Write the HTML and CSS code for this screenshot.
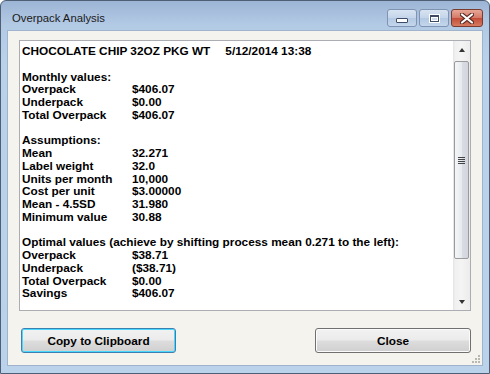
FILE: index.html
```html
<!DOCTYPE html>
<html lang="en">
<head>
    <meta charset="utf-8">
    <title>Overpack Analysis</title>
    <link rel="stylesheet" href="styles.css">
</head>
<body>

    <div class="window">
        <div class="titlebar">
            <span class="title">Overpack Analysis</span>
            <div class="caption">
                <div class="cap min"><span class="min-glyph"></span></div>
                <div class="cap max"><span class="max-glyph"></span></div>
                <div class="cap close">
                    <svg width="14" height="11" viewBox="0 0 14 11">
                        <path d="M2 1.5 L12 9.5 M12 1.5 L2 9.5" stroke="#5a2a22" stroke-width="4.2" stroke-linecap="round"/>
                        <path d="M2 1.5 L12 9.5 M12 1.5 L2 9.5" stroke="#fff" stroke-width="2.2" stroke-linecap="round"/>
                    </svg>
                </div>
            </div>
        </div>

        <div class="client">
            <div class="output">
                <div class="text">
                    <div class="line">CHOCOLATE CHIP 32OZ PKG WT<span class="date">5/12/2014 13:38</span></div>

                    <div class="block">
                        <div class="line">Monthly values:</div>
                        <div class="row"><span>Overpack</span><span>$406.07</span></div>
                        <div class="row"><span>Underpack</span><span>$0.00</span></div>
                        <div class="row"><span>Total Overpack</span><span>$406.07</span></div>
                    </div>

                    <div class="block">
                        <div class="line">Assumptions:</div>
                        <div class="row"><span>Mean</span><span>32.271</span></div>
                        <div class="row"><span>Label weight</span><span>32.0</span></div>
                        <div class="row"><span>Units per month</span><span>10,000</span></div>
                        <div class="row"><span>Cost per unit</span><span>$3.00000</span></div>
                        <div class="row"><span>Mean - 4.5SD</span><span>31.980</span></div>
                        <div class="row"><span>Minimum value</span><span>30.88</span></div>
                    </div>

                    <div class="block">
                        <div class="line">Optimal values (achieve by shifting process mean 0.271 to the left):</div>
                        <div class="row"><span>Overpack</span><span>$38.71</span></div>
                        <div class="row"><span>Underpack</span><span>($38.71)</span></div>
                        <div class="row"><span>Total Overpack</span><span>$0.00</span></div>
                        <div class="row"><span>Savings</span><span>$406.07</span></div>
                    </div>
                </div>

                <div class="scrollbar">
                    <div class="arrow"><span class="up"></span></div>
                    <div class="thumb">
                        <div class="grip"></div>
                    </div>
                    <div class="track"></div>
                    <div class="arrow"><span class="down"></span></div>
                </div>
            </div>

            <div class="buttons">
                <button class="btn default">Copy to Clipboard</button>
                <button class="btn">Close</button>
            </div>

            <svg class="sizegrip" width="10" height="10" viewBox="0 0 10 10">
                <g fill="#b8b8b0">
                    <rect x="7" y="1" width="2" height="2"/>
                    <rect x="4" y="4" width="2" height="2"/>
                    <rect x="7" y="4" width="2" height="2"/>
                    <rect x="1" y="7" width="2" height="2"/>
                    <rect x="4" y="7" width="2" height="2"/>
                    <rect x="7" y="7" width="2" height="2"/>
                </g>
            </svg>
        </div>
    </div>

</body>
</html>
```

FILE: styles.css
```css
body {
    margin: 0;
    background-color: #ffffff;
}

.window {
    width: 490px;
    height: 374px;
    box-sizing: border-box;
    border: 1px solid #4d5e75;
    border-radius: 6px 6px 0 0;
    background: linear-gradient(#9db5d5 0, #b3cae5 24px, #bad1ea 60px, #bbd2eb 100%);
    padding: 0 6px 7px 6px;
    display: flex;
    flex-direction: column;
}

.titlebar {
    height: 29px;
    display: flex;
    align-items: flex-start;
    justify-content: space-between;
    flex-shrink: 0;
}

.title {
    font-family: "Liberation Sans", Arial, sans-serif;
    font-size: 11.3px;
    color: #1a1a1a;
    margin: 11px 0 0 5px;
}

.caption {
    display: flex;
    gap: 2px;
    margin-top: 8px;
}

.cap {
    height: 18px;
    box-sizing: border-box;
    border: 1px solid #7f94b2;
    border-radius: 3px;
    display: flex;
    align-items: center;
    justify-content: center;
    background: linear-gradient(#d7e3f1 0, #c4d5ea 50%, #b3c8e2 51%, #c3d6ec 100%);
}

.min, .max {
    width: 30px;
}

.close {
    width: 32px;
    border-color: #7a3a30;
    background: linear-gradient(#e7a797 0, #d47866 50%, #c44c38 51%, #d57a60 100%);
}

.min-glyph {
    width: 10px;
    height: 3px;
    margin-top: 5px;
    background: #ffffff;
    border: 1px solid #3c4c66;
    border-radius: 1px;
}

.max-glyph {
    width: 7px;
    height: 4px;
    border: 1px solid #3c4c66;
    border-top-width: 2px;
    box-shadow: 0 0 0 1px #ffffff, inset 0 0 0 1px #ffffff;
    background: #cfdcec;
}

.client {
    flex: 1;
    background-color: #f4f3ee;
    border: 1px solid #9fb3cc;
    padding: 9px 11px 0 11px;
    display: flex;
    flex-direction: column;
    position: relative;
}

.output {
    height: 271px;
    box-sizing: border-box;
    border: 1px solid #abadb3;
    background: #ffffff;
    display: flex;
}

.text {
    flex: 1;
    padding: 4px 2px 3px 2px;
    font-family: "Liberation Sans", Arial, sans-serif;
    font-weight: bold;
    font-size: 11.8px;
    line-height: 12.75px;
    color: #000000;
    white-space: nowrap;
}

.date {
    margin-left: 15px;
}

.block {
    margin-top: 12.75px;
}

.row {
    display: grid;
    grid-template-columns: 110px auto;
}

.scrollbar {
    width: 17px;
    display: flex;
    flex-direction: column;
    background: linear-gradient(to right, #e3e3e3 0, #f0f0f0 2px, #f4f4f4 50%, #ececec 100%);
}

.arrow {
    height: 17px;
    display: flex;
    align-items: center;
    justify-content: center;
    flex-shrink: 0;
}

.up, .down {
    width: 0;
    height: 0;
    border-left: 3.5px solid transparent;
    border-right: 3.5px solid transparent;
}

.up {
    border-bottom: 4px solid #333333;
}

.down {
    border-top: 4px solid #333333;
}

.thumb {
    height: 198px;
    margin: 3px 1px 0 1px;
    box-sizing: border-box;
    border: 1px solid #9a9a9a;
    border-radius: 2px;
    background: linear-gradient(to right, #f4f6f8 0, #e8ebef 50%, #dadee4 51%, #d2d6dc 100%);
    display: flex;
    align-items: center;
    justify-content: center;
}

.grip {
    width: 7px;
    height: 7px;
    background: repeating-linear-gradient(#444 0, #444 1px, transparent 1px, transparent 2px);
}

.track {
    flex: 1;
}

.buttons {
    display: flex;
    justify-content: space-between;
    margin-top: 17px;
    padding: 0 0 0 2px;
}

.btn {
    height: 25px;
    box-sizing: border-box;
    font-family: "Liberation Sans", Arial, sans-serif;
    font-weight: bold;
    font-size: 11.8px;
    color: #000000;
    border: 1px solid #707070;
    border-radius: 3px;
    padding: 0;
    background: linear-gradient(#f2f2f2 0, #ebebeb 48%, #dddddd 52%, #cfcfcf 100%);
    box-shadow: inset 0 0 0 1px #fbfbfb;
}

.btn:first-child {
    width: 155px;
}

.btn:last-child {
    width: 156px;
}

.default {
    border-color: #3c7fb1;
    box-shadow: inset 0 0 0 1px #48d8fb;
}

.sizegrip {
    position: absolute;
    right: 1px;
    bottom: 1px;
}
```
